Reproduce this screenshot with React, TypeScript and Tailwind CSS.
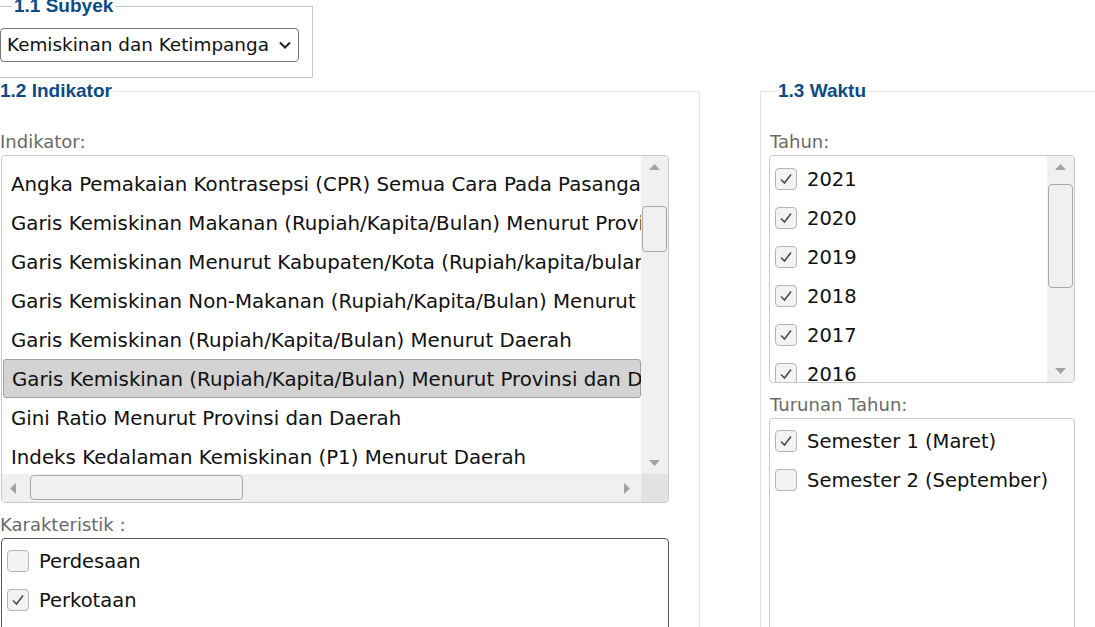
import React from "react";

const LIST_FONT = { fontFamily: '"DejaVu Sans", Verdana, sans-serif' };

const indikator = [
  "Angka Pemakaian Kontrasepsi (CPR) Semua Cara Pada Pasangan Usia Subur Menurut Provinsi",
  "Garis Kemiskinan Makanan (Rupiah/Kapita/Bulan) Menurut Provinsi dan Daerah",
  "Garis Kemiskinan Menurut Kabupaten/Kota (Rupiah/kapita/bulan)",
  "Garis Kemiskinan Non-Makanan (Rupiah/Kapita/Bulan) Menurut Provinsi dan Daerah",
  "Garis Kemiskinan (Rupiah/Kapita/Bulan) Menurut Daerah",
  "Garis Kemiskinan (Rupiah/Kapita/Bulan) Menurut Provinsi dan Daerah",
  "Gini Ratio Menurut Provinsi dan Daerah",
  "Indeks Kedalaman Kemiskinan (P1) Menurut Daerah",
];

const tahun = ["2021", "2020", "2019", "2018", "2017", "2016"];

function Tri({ dir }: { dir: "up" | "down" | "left" | "right" }) {
  const pts = {
    up: "0,6 5.5,0 11,6",
    down: "0,0 5.5,6 11,0",
    left: "6,0 0,5.5 6,11",
    right: "0,0 6,5.5 0,11",
  }[dir];
  const w = dir === "up" || dir === "down" ? 11 : 6;
  const h = dir === "up" || dir === "down" ? 6 : 11;
  return (
    <svg width={w} height={h} viewBox={`0 0 ${w} ${h}`}>
      <polygon points={pts} fill="#a3a3a3" />
    </svg>
  );
}

function Check({ on }: { on: boolean }) {
  return (
    <span className="flex h-[22px] w-[22px] shrink-0 items-center justify-center rounded-[4px] border border-[#b5b5b5] bg-[#f3f3f3]">
      {on ? (
        <svg width="16" height="16" viewBox="0 0 16 16">
          <path d="M3 8.5 L6.5 12 L13 3.5" fill="none" stroke="#4a4a4a" strokeWidth="1.6" />
        </svg>
      ) : null}
    </span>
  );
}

function CheckRow({ on, label, tight = false }: { on: boolean; label: string; tight?: boolean }) {
  return (
    <div className={`flex h-[39px] shrink-0 items-center gap-[10px] ${tight ? "pl-[5px]" : "pl-[5px]"}`}>
      <Check on={on} />
      <span className="pt-[2px] text-[19.5px] text-[#111]" style={LIST_FONT}>
        {label}
      </span>
    </div>
  );
}

function VScroll({ thumbTop, thumbH }: { thumbTop: number; thumbH: number }) {
  return (
    <div className="relative flex w-[27px] shrink-0 flex-col items-center bg-[#f0f0f0]">
      <div className="mt-[8px]">
        <Tri dir="up" />
      </div>
      <div
        className="absolute left-[1px] w-[25px] rounded-[4px] border border-[#a8a8a8] bg-[#f0f0f0]"
        style={{ top: thumbTop, height: thumbH }}
      />
      <div className="mt-auto mb-[8px]">
        <Tri dir="down" />
      </div>
    </div>
  );
}

function Legend({ children, className = "" }: { children: React.ReactNode; className?: string }) {
  return (
    <legend
      className={`text-[19px] font-bold leading-[22px] text-[#0d4b82] ${className}`}
      style={{ fontFamily: '"Liberation Sans", Arial, sans-serif' }}
    >
      {children}
    </legend>
  );
}

function Label({ children, className = "" }: { children: React.ReactNode; className?: string }) {
  return (
    <div className={`text-[18px] leading-[22px] text-[#6a6a6a] ${className}`} style={LIST_FONT}>
      {children}
    </div>
  );
}

export default function App() {
  return (
    <div className="h-[627px] w-[1095px] overflow-hidden bg-white">
      <fieldset className="mt-[-5px] w-[313px] border border-l-0 border-[#c4c4c4] p-0 pb-[15px]">
        <Legend className="ml-[12px] px-[2px]">1.1 Subyek</Legend>
        <div
          className="mt-[11px] flex h-[34px] w-[299px] items-center justify-between rounded-[4px] border border-[#767676] pl-[6px] pr-[6px]"
          style={LIST_FONT}
        >
          <span className="text-[18.4px] text-[#111]">Kemiskinan dan Ketimpanga</span>
          <svg width="14" height="10" viewBox="0 0 14 10">
            <path d="M2 2.5 L7 7.5 L12 2.5" fill="none" stroke="#222" strokeWidth="2" />
          </svg>
        </div>
      </fieldset>

      <div className="mt-[2px] flex">
        <fieldset className="h-[600px] w-[700px] shrink-0 border border-l-0 border-[#e4e4e4] p-0">
          <Legend className="pr-[2px]">1.2 Indikator</Legend>
          <Label className="mt-[29px]">Indikator:</Label>

          <div className="ml-[1px] mt-[2px] flex h-[348px] w-[668px] flex-col overflow-hidden rounded-[4px] border border-[#c8c8c8]">
            <div className="flex min-h-0 flex-1">
              <div className="flex min-w-0 flex-1 flex-col overflow-hidden pl-[1px] pt-[8px]">
                {indikator.map((t, i) => (
                  <div
                    key={i}
                    className={`flex h-[39px] shrink-0 items-center whitespace-nowrap rounded-[3px] pl-[8px] pt-[3px] text-[19.8px] text-[#111] ${
                      i === 5 ? "border border-[#a2a2a2] bg-[#d3d3d3] pl-[7px]" : ""
                    }`}
                    style={LIST_FONT}
                  >
                    {t}
                  </div>
                ))}
              </div>
              <VScroll thumbTop={50} thumbH={46} />
            </div>
            <div className="flex h-[28px] shrink-0">
              <div className="relative flex flex-1 items-center bg-[#f0f0f0] px-[8px]">
                <Tri dir="left" />
                <div className="absolute left-[28px] top-[1px] h-[25px] w-[213px] rounded-[4px] border border-[#a8a8a8] bg-[#f0f0f0]" />
                <div className="ml-auto mr-[3px]">
                  <Tri dir="right" />
                </div>
              </div>
              <div className="w-[27px] bg-[#e2e2e2]" />
            </div>
          </div>

          <Label className="mt-[11px]">Karakteristik :</Label>
          <div className="ml-[1px] mt-[2px] flex h-[200px] w-[668px] flex-col rounded-[4px] border border-[#555] pt-[2px]">
            <CheckRow on={false} label="Perdesaan" tight />
            <CheckRow on={true} label="Perkotaan" tight />
          </div>
        </fieldset>

        <fieldset className="ml-[60px] h-[600px] w-[400px] shrink-0 border border-[#e4e4e4] p-0 pl-[8px]">
          <Legend className="ml-[8px] px-[1px]">1.3 Waktu</Legend>
          <Label className="mt-[29px] pl-[1px]">Tahun:</Label>
          <div className="mt-[2px] flex h-[228px] w-[306px] overflow-hidden rounded-[4px] border border-[#c8c8c8]">
            <div className="flex min-w-0 flex-1 flex-col overflow-hidden pt-[3px]">
              {tahun.map((y) => (
                <CheckRow key={y} on={true} label={y} />
              ))}
            </div>
            <VScroll thumbTop={28} thumbH={104} />
          </div>

          <Label className="mt-[11px] pl-[1px]">Turunan Tahun:</Label>
          <div className="mt-[2px] flex h-[240px] w-[306px] flex-col rounded-[4px] border border-[#c8c8c8] pt-[2px]">
            <CheckRow on={true} label="Semester 1 (Maret)" />
            <CheckRow on={false} label="Semester 2 (September)" />
          </div>
        </fieldset>
      </div>
    </div>
  );
}
